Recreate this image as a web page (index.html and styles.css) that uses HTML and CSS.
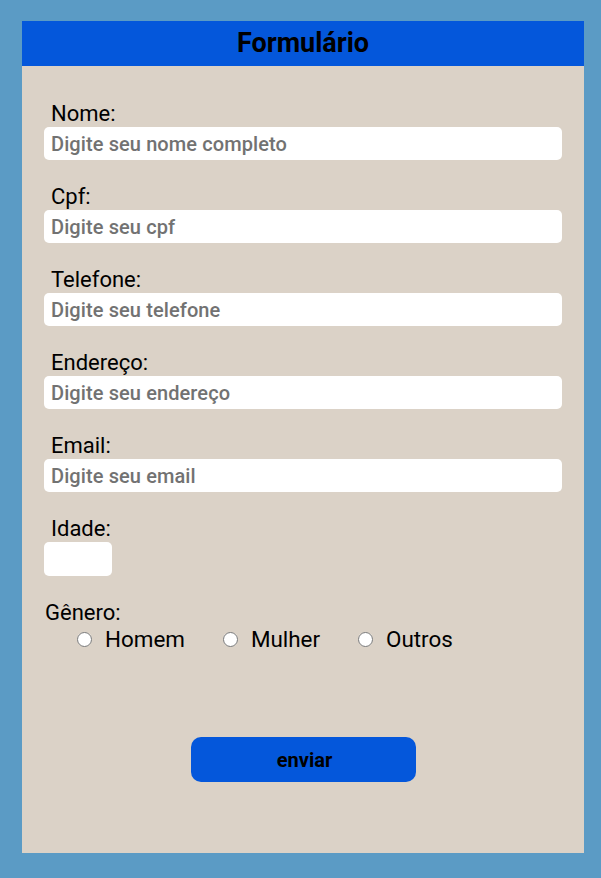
FILE: index.html
```html
<!DOCTYPE html>
<html lang="pt-BR">
<head>
<meta charset="utf-8">
<title>Formulário</title>
<link rel="stylesheet" href="styles.css">
</head>
<body>
<div class="card">
  <h1 class="title">Formulário</h1>
  <form class="form">
    <div class="field">
      <label class="label" for="nome">Nome:</label>
      <input class="input" id="nome" type="text" placeholder="Digite seu nome completo">
    </div>
    <div class="field">
      <label class="label" for="cpf">Cpf:</label>
      <input class="input" id="cpf" type="text" placeholder="Digite seu cpf">
    </div>
    <div class="field">
      <label class="label" for="tel">Telefone:</label>
      <input class="input" id="tel" type="text" placeholder="Digite seu telefone">
    </div>
    <div class="field">
      <label class="label" for="end">Endereço:</label>
      <input class="input" id="end" type="text" placeholder="Digite seu endereço">
    </div>
    <div class="field">
      <label class="label" for="email">Email:</label>
      <input class="input" id="email" type="text" placeholder="Digite seu email">
    </div>
    <div class="field">
      <label class="label" for="idade">Idade:</label>
      <input class="input input-small" id="idade" type="text">
    </div>
    <div class="field gender">
      <span class="label label-flush">Gênero:</span>
      <div class="radios">
        <label class="radio"><input type="radio" name="genero" class="radio-input"><span>Homem</span></label>
        <label class="radio"><input type="radio" name="genero" class="radio-input"><span>Mulher</span></label>
        <label class="radio"><input type="radio" name="genero" class="radio-input"><span>Outros</span></label>
      </div>
    </div>
    <div class="actions">
      <button class="button" type="button">enviar</button>
    </div>
  </form>
</div>
</body>
</html>
```
FILE: styles.css
```css
html, body {
  margin: 0;
  padding: 0;
}
body {
  background: #5b9bc5;
  font-family: Roboto, "Noto Sans", sans-serif;
  padding: 21px 17px 25px 22px;
  height: 878px;
  box-sizing: border-box;
}
.card {
  background: #dbd2c7;
  width: 562px;
  height: 832px;
}
.title {
  margin: 0;
  background: #0457db;
  height: 45px;
  line-height: 45px;
  text-align: center;
  font-size: 27px;
  font-weight: 700;
  color: #000;
}
.form {
  padding: 35px 22px 0 22px;
  display: flex;
  flex-direction: column;
}
.field {
  display: flex;
  flex-direction: column;
  margin-bottom: 24px;
}
.label {
  display: block;
  font-size: 22px;
  font-weight: 400;
  line-height: 26px;
  height: 26px;
  padding-left: 7px;
  color: #000;
}
.label-flush {
  padding-left: 1px;
}
.input {
  box-sizing: border-box;
  width: 518px;
  height: 33px;
  border: none;
  border-radius: 5px;
  background: #fff;
  padding: 0 7px;
  font-family: Roboto, "Noto Sans", sans-serif;
  font-size: 20px;
  font-weight: 500;
  letter-spacing: 0.1px;
  outline: none;
}
.input::placeholder {
  color: #727272;
}
.input-small {
  width: 68px;
  height: 34px;
}
.radios {
  display: flex;
  align-items: center;
  padding-left: 33px;
  height: 26px;
}
.radio {
  display: flex;
  align-items: center;
  font-size: 22.4px;
  font-weight: 400;
  line-height: 26px;
  margin-right: 38px;
}
.radio-input {
  width: 15px;
  height: 15px;
  margin: 0 13px 0 0;
}
.actions {
  display: flex;
  justify-content: center;
  padding-top: 61px;
}
.button {
  width: 225px;
  height: 45px;
  border: none;
  border-radius: 10px;
  background: #0457db;
  color: #000;
  font-family: Roboto, "Noto Sans", sans-serif;
  font-size: 20px;
  font-weight: 700;
  padding: 0 0 0 3px;
}
```
